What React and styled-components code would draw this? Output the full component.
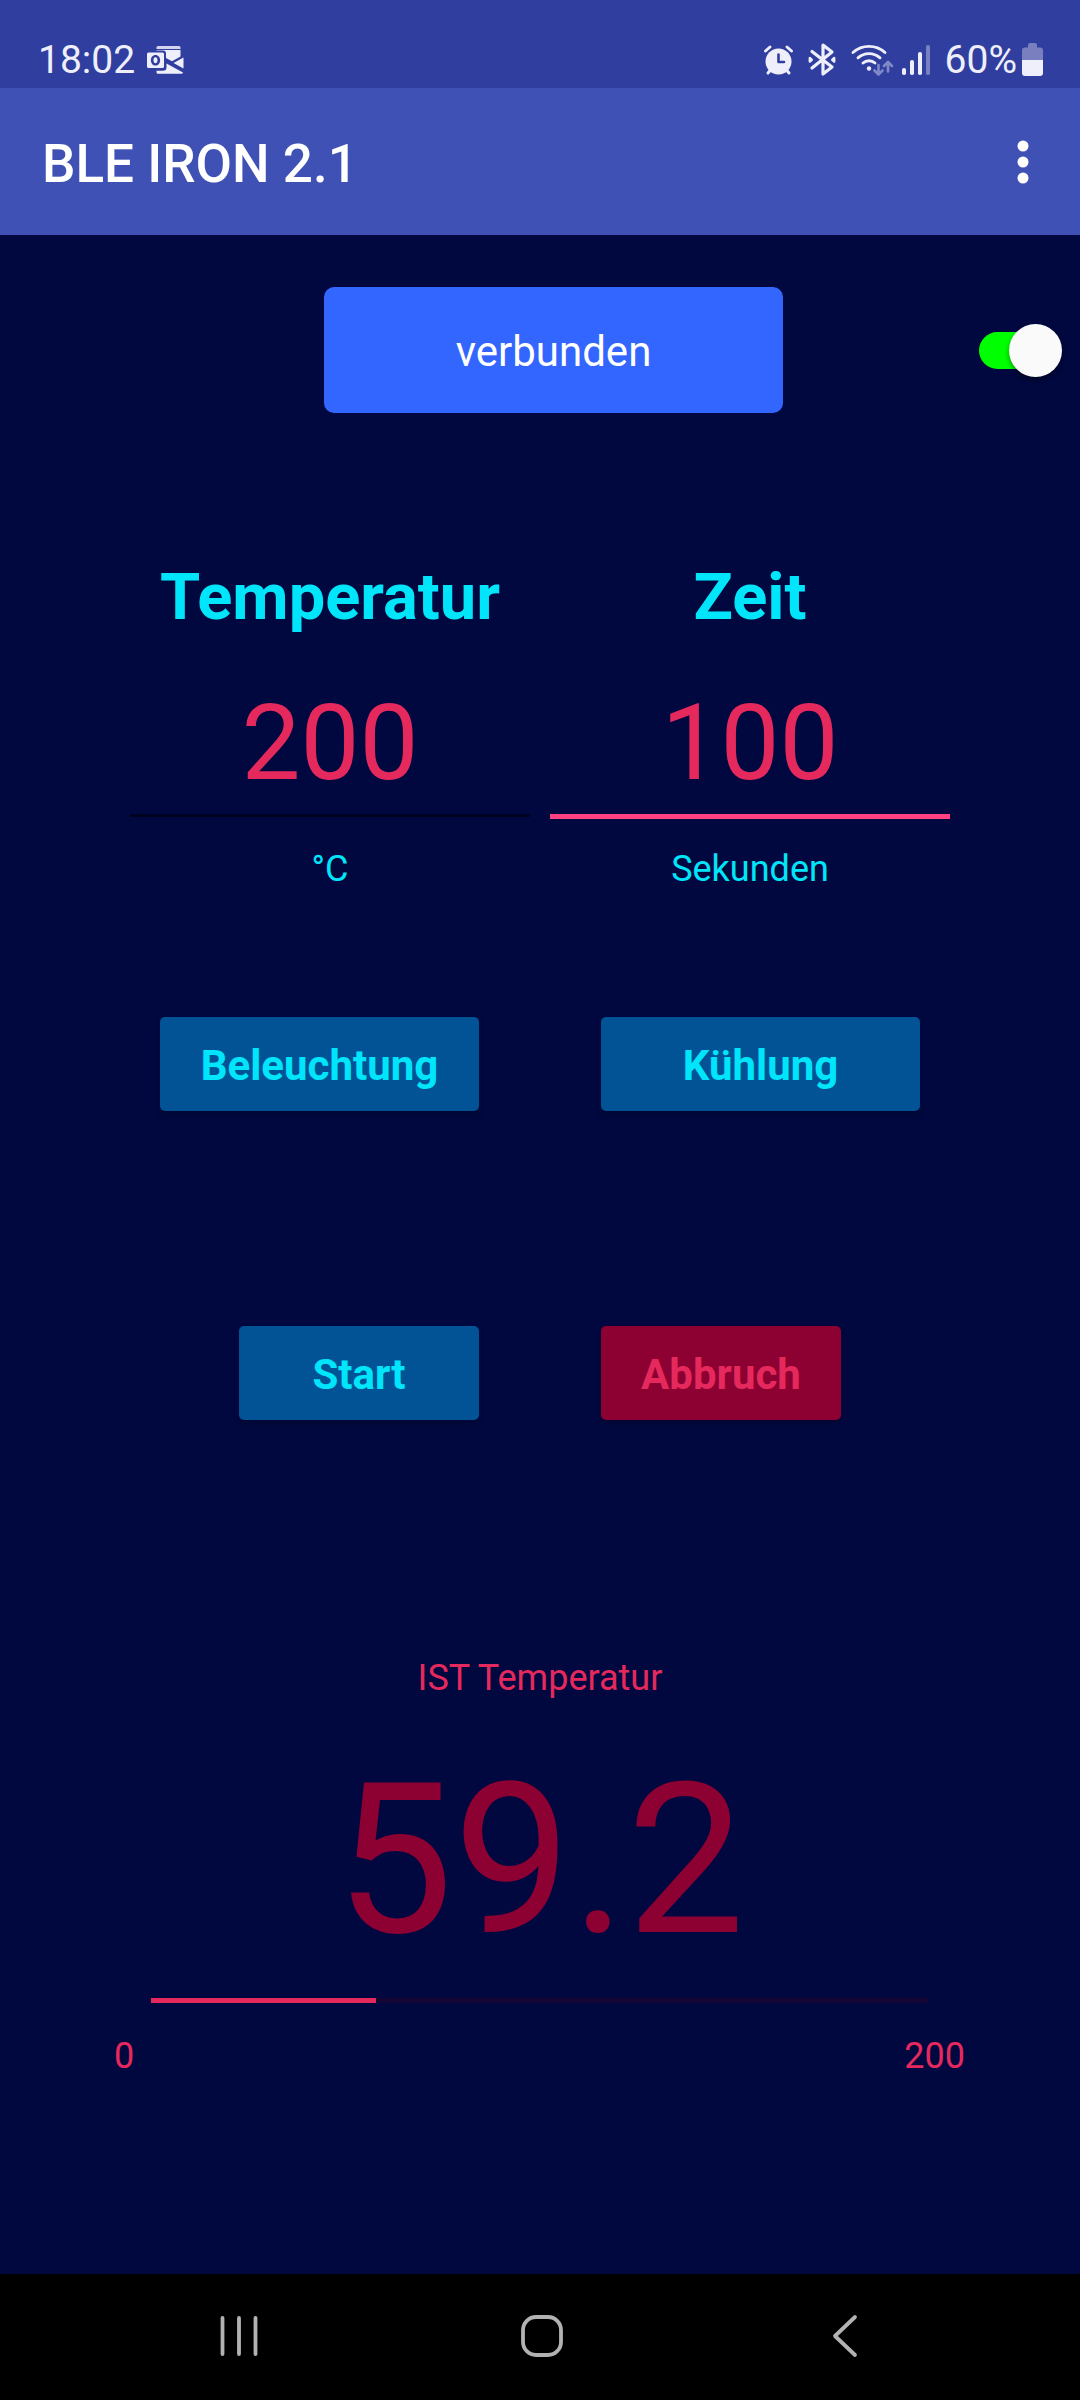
import React, { useState } from "react";
import styled, { createGlobalStyle, css } from "styled-components";

const color = {
  status: "#303f9f",
  bar: "#3f51b5",
  page: "#00083f",
  cyan: "#00e5fa",
  rose: "#e5295d",
  crimson: "#8c0032",
  accent: "#ff4081",
  steel: "#015396",
  connect: "#3366ff",
  statusIcon: "#eeeffa",
  navIcon: "#b2b2b2",
};

const GlobalStyle = createGlobalStyle`
  *, *::before, *::after { box-sizing: border-box; }
  body { margin: 0; background: ${color.page}; }
  body, button, input { font-family: Roboto, "Noto Sans", sans-serif; }
`;

const Screen = styled.div`
  display: flex;
  flex-direction: column;
  min-height: 100vh;
`;

const StatusBar = styled.div`
  display: flex;
  align-items: center;
  justify-content: space-between;
  height: 88px;
  padding: 31px 37px 0 38px;
  background: ${color.status};
  color: ${color.statusIcon};
  font-size: 39px;
  line-height: 46px;
`;

const StatusGroup = styled.div`
  display: flex;
  align-items: center;
  gap: ${(p) => p.$gap}px;
`;

const Glyph = styled.svg`
  display: block;
  flex: none;
  overflow: visible;
`;

const AppBar = styled.header`
  display: flex;
  align-items: center;
  justify-content: space-between;
  height: 147px;
  padding: 0 31px 0 42px;
  background: ${color.bar};
`;

const Title = styled.h1`
  margin: 0;
  padding-top: 4px;
  color: #fff;
  font-size: 53px;
  font-weight: 500;
  line-height: 62px;
`;

const IconButton = styled.button`
  display: flex;
  align-items: center;
  justify-content: center;
  padding: 20px;
  border: 0;
  background: none;
  color: inherit;
  cursor: pointer;
`;

const Main = styled.main`
  flex: 1;
  display: flex;
  flex-direction: column;
  padding: 52px 0;
`;

const ConnectionRow = styled.div`
  display: grid;
  grid-template-columns: 1fr 459px 1fr;
  align-items: center;
  padding: 0 18px 0 45px;
`;

const ConnectButton = styled.button`
  grid-column: 2;
  height: 126px;
  padding: 4px 0 0;
  border: 0;
  border-radius: 10px;
  background: ${color.connect};
  color: #fff;
  font-size: 42px;
  line-height: 50px;
  cursor: pointer;
`;

const Switch = styled.input`
  appearance: none;
  justify-self: end;
  display: flex;
  align-items: center;
  width: 83px;
  height: 53px;
  margin: 0;
  cursor: pointer;

  &::before {
    content: "";
    flex: 1;
    height: 37px;
    margin-right: -44px;
    border-radius: 19px;
    background: ${(p) => (p.checked ? "#00ff00" : "#5a5f80")};
  }

  &::after {
    content: "";
    width: 53px;
    height: 53px;
    border-radius: 50%;
    background: #fafafa;
    box-shadow: 0 3px 5px rgba(0, 0, 0, 0.4);
  }
`;

const Fields = styled.div`
  display: grid;
  grid-template-columns: 1fr 1fr;
  gap: 20px;
  margin-top: 144px;
  padding: 0 130px;
`;

const Field = styled.div`
  display: flex;
  flex-direction: column;
  align-items: center;
`;

const FieldName = styled.label`
  color: ${color.cyan};
  font-size: 65px;
  font-weight: 700;
  line-height: 80px;
`;

const NumberInput = styled.input`
  width: 100%;
  height: 138px;
  margin: 44px 0 28px;
  padding: 0 0 ${(p) => (p.$active ? 9 : 14)}px;
  border: 0;
  background: none;
  color: ${color.rose};
  font-size: 105px;
  line-height: 124px;
  text-align: center;
  outline: none;
  ${(p) =>
    p.$active
      ? css`
          border-bottom: 5px solid ${color.accent};
        `
      : css`
          background: linear-gradient(#000320, #000320) no-repeat 0 133px / 100% 3px;
        `}
`;

const Caption = styled.span`
  color: ${(p) => p.$color};
  font-size: 36px;
  line-height: 44px;
  text-align: center;
`;

const ButtonPair = styled.div`
  display: grid;
  grid-template-columns: 1fr 1fr;
  gap: 122px;
  margin-top: ${(p) => p.$space}px;

  & > :first-child {
    justify-self: end;
  }
`;

const ActionButton = styled.button`
  width: ${(p) => (p.$wide ? 319 : 240)}px;
  height: 94px;
  padding: 4px 0 0;
  border: 0;
  border-radius: 5px;
  background: ${(p) => (p.$danger ? color.crimson : color.steel)};
  box-shadow: 0 4px 6px rgba(0, 0, 0, 0.2);
  color: ${(p) => (p.$danger ? color.rose : color.cyan)};
  font-size: 42px;
  font-weight: 700;
  line-height: 50px;
  cursor: pointer;
`;

const Reading = styled.section`
  display: flex;
  flex-direction: column;
  margin-top: 236px;
`;

const ReadingValue = styled.output`
  margin: 37px 0 15px;
  color: ${color.crimson};
  font-size: 210px;
  line-height: 246px;
  text-align: center;
`;

const Meter = styled.progress`
  appearance: none;
  display: block;
  width: auto;
  height: 5px;
  margin: 0 152px 31px 151px;
  border: 0;
  background: #130534;

  &::-webkit-progress-bar {
    background: #130534;
  }
  &::-webkit-progress-value {
    background: ${color.rose};
  }
`;

const Scale = styled.div`
  display: flex;
  justify-content: space-between;
  padding: 0 115px 0 114px;
`;

const NavBar = styled.nav`
  display: grid;
  grid-template-columns: repeat(3, 1fr);
  justify-items: center;
  align-items: center;
  height: 126px;
  padding: 0 84px 2px 88px;
  background: #000;
  color: ${color.navIcon};
`;

const OutlookIcon = () => (
  <Glyph width="37" height="28" viewBox="0 0 37 28" fill="currentColor">
    <path d="M11 0h21a1.500 1.500 0 0 1 1.500 1.500v1.500h-24V1.500A1.500 1.500 0 0 1 11 0z" opacity=".85" />
    <path d="M9.500 4h24v6.500L25 15.200 19 12V7.500A3 3 0 0 0 16 4.500H9.500z" />
    <path d="M36.500 11.500v11L26.500 17z" />
    <path d="M19.500 17.500 36 26.500a1.500 1.500 0 0 1-1 1.200H11a1.500 1.500 0 0 1-1.500-1.500V24.800H16a3.500 3.500 0 0 0 3.500-3.500z" />
    <path
      fillRule="evenodd"
      d="M1.500 6.500h14a1.500 1.500 0 0 1 1.500 1.500v12.500a1.500 1.500 0 0 1-1.500 1.500h-14A1.500 1.500 0 0 1 0 20.500V8a1.500 1.500 0 0 1 1.500-1.500zM8.500 9C5.700 9 3.900 11.300 3.900 14.200s1.800 5.300 4.600 5.300 4.600-2.400 4.600-5.300S11.300 9 8.500 9zm0 2.300c1.300 0 2 1.300 2 2.900s-.7 3-2 3-2-1.400-2-3 .7-2.900 2-2.900z"
    />
  </Glyph>
);

const AlarmIcon = () => (
  <Glyph width="29" height="30" viewBox="0 0 29 30" fill="none" stroke="currentColor" strokeLinecap="round">
    <circle cx="14.500" cy="16.500" r="13" fill="currentColor" stroke="none" />
    <path d="M1.500 6 6 2M27.500 6 23 2M4 28l2.500-3M25 28l-2.500-3" strokeWidth="3" />
    <path d="M14.500 9.500V17H20" stroke={color.status} strokeWidth="2.600" strokeLinejoin="round" />
  </Glyph>
);

const BluetoothIcon = () => (
  <Glyph
    width="28"
    height="33"
    viewBox="0 0 28 33"
    fill="none"
    stroke="currentColor"
    strokeWidth="3.200"
    strokeLinecap="round"
    strokeLinejoin="round"
  >
    <path d="M4 8.500 24 24 15 31V2l9 7L4 25" />
    <path d="M1.800 15v3.600l2-1.800zM26.200 15v3.600l-2-1.800z" strokeWidth="2.400" />
  </Glyph>
);

const WifiIcon = () => (
  <Glyph width="42" height="32" viewBox="0 0 42 32" fill="none" stroke="currentColor" strokeLinecap="round">
    <path d="M2 8.500a24 24 0 0 1 32 0M7 13.800a16.500 16.500 0 0 1 22 0M12 19a9 9 0 0 1 12 0" strokeWidth="2.900" />
    <circle cx="18" cy="24.500" r="2.200" fill="currentColor" stroke="none" />
    <path
      d="M27.500 21v9M23.500 26.500l4 4 4-4M37 27.500v-9M33 22l4-4 4 4"
      stroke="#8089c8"
      strokeWidth="2.600"
      strokeLinejoin="round"
    />
  </Glyph>
);

const SignalIcon = () => (
  <Glyph width="28" height="30" viewBox="0 0 28 30" fill="currentColor">
    <rect x="0" y="23" width="4" height="7" rx="1.800" />
    <rect x="8" y="15" width="4" height="15" rx="1.800" />
    <rect x="16" y="7" width="4" height="23" rx="1.800" />
    <rect x="24" y="0" width="4" height="30" rx="1.800" fill="#7780c0" />
  </Glyph>
);

const BatteryIcon = () => (
  <Glyph width="21" height="33" viewBox="0 0 21 33">
    <path d="M6 2a2 2 0 0 1 2-2h5a2 2 0 0 1 2 2v2.500h3a3 3 0 0 1 3 3V17H0V7.500a3 3 0 0 1 3-3h3z" fill="#7a80bf" />
    <path d="M0 17h21v13a3 3 0 0 1-3 3H3a3 3 0 0 1-3-3z" fill="currentColor" />
  </Glyph>
);

const MoreIcon = () => (
  <Glyph width="12" height="44" viewBox="0 0 12 44" fill="#fff">
    <circle cx="6" cy="6" r="5.500" />
    <circle cx="6" cy="22" r="5.500" />
    <circle cx="6" cy="38" r="5.500" />
  </Glyph>
);

const NavGlyph = ({ children }) => (
  <Glyph
    width="42"
    height="42"
    viewBox="0 0 42 42"
    fill="none"
    stroke="currentColor"
    strokeWidth="3.800"
    strokeLinecap="round"
    strokeLinejoin="round"
  >
    {children}
  </Glyph>
);

function NumberField({ id, name, unit, value, onChange, active, onFocus }) {
  return (
    <Field>
      <FieldName htmlFor={id}>{name}</FieldName>
      <NumberInput
        id={id}
        inputMode="numeric"
        value={value}
        onChange={(e) => onChange(e.target.value)}
        onFocus={onFocus}
        $active={active}
      />
      <Caption $color={color.cyan}>{unit}</Caption>
    </Field>
  );
}

export default function App() {
  const [connected, setConnected] = useState(true);
  const [temperature, setTemperature] = useState("200");
  const [seconds, setSeconds] = useState("100");
  const [active, setActive] = useState("zeit");

  return (
    <Screen>
      <GlobalStyle />
      <StatusBar>
        <StatusGroup $gap={12}>
          <span>18:02</span>
          <OutlookIcon />
        </StatusGroup>
        <StatusGroup $gap={15}>
          <AlarmIcon />
          <BluetoothIcon />
          <StatusGroup $gap={9}>
            <WifiIcon />
            <SignalIcon />
          </StatusGroup>
          <StatusGroup $gap={5}>
            <span>60%</span>
            <BatteryIcon />
          </StatusGroup>
        </StatusGroup>
      </StatusBar>
      <AppBar>
        <Title>BLE IRON 2.1</Title>
        <IconButton type="button" aria-label="Menü">
          <MoreIcon />
        </IconButton>
      </AppBar>
      <Main>
        <ConnectionRow>
          <ConnectButton type="button">verbunden</ConnectButton>
          <Switch
            type="checkbox"
            role="switch"
            aria-label="Verbindung"
            checked={connected}
            onChange={(e) => setConnected(e.target.checked)}
          />
        </ConnectionRow>
        <Fields>
          <NumberField
            id="temperatur"
            name="Temperatur"
            unit="°C"
            value={temperature}
            onChange={setTemperature}
            active={active === "temperatur"}
            onFocus={() => setActive("temperatur")}
          />
          <NumberField
            id="zeit"
            name="Zeit"
            unit="Sekunden"
            value={seconds}
            onChange={setSeconds}
            active={active === "zeit"}
            onFocus={() => setActive("zeit")}
          />
        </Fields>
        <ButtonPair $space={126}>
          <ActionButton type="button" $wide>Beleuchtung</ActionButton>
          <ActionButton type="button" $wide>Kühlung</ActionButton>
        </ButtonPair>
        <ButtonPair $space={215}>
          <ActionButton type="button">Start</ActionButton>
          <ActionButton type="button" $danger>Abbruch</ActionButton>
        </ButtonPair>
        <Reading>
          <Caption id="ist" $color={color.rose}>IST Temperatur</Caption>
          <ReadingValue aria-labelledby="ist">59.2</ReadingValue>
          <Meter aria-labelledby="ist" value={29} max={100} />
          <Scale>
            <Caption $color={color.rose}>0</Caption>
            <Caption $color={color.rose}>200</Caption>
          </Scale>
        </Reading>
      </Main>
      <NavBar>
        <IconButton type="button" aria-label="Letzte Apps">
          <NavGlyph>
            <path d="M4.500 3v36M21 3v36M37.500 3v36" />
          </NavGlyph>
        </IconButton>
        <IconButton type="button" aria-label="Startbildschirm">
          <NavGlyph>
            <rect x="2" y="2" width="38" height="38" rx="13" />
          </NavGlyph>
        </IconButton>
        <IconButton type="button" aria-label="Zurück">
          <NavGlyph>
            <path d="M31 2 11 21l20 19" />
          </NavGlyph>
        </IconButton>
      </NavBar>
    </Screen>
  );
}
